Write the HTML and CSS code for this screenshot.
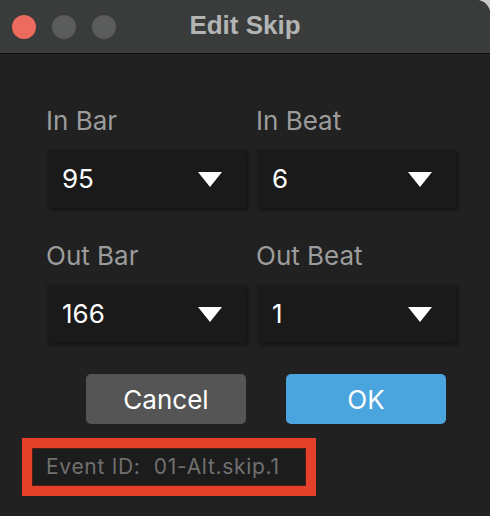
FILE: index.html
```html
<!DOCTYPE html>
<html>
<head>
    <title>Edit Skip</title>
    <meta name="viewport" content="width=device-width, initial-scale=1">
    <link rel="stylesheet" href="styles.css">
</head>
<body>
    <div class="window">
        <div class="titlebar">
            <div class="lights">
                <span class="light close"></span>
                <span class="light"></span>
                <span class="light"></span>
            </div>
            <div class="title">Edit Skip</div>
            <div></div>
        </div>

        <form class="content" id="skipForm">
            <div class="fields">
                <div class="field">
                    <label>In Bar</label>
                    <div class="select"><span>95</span><svg width="24" height="15" viewBox="0 0 24 15"><polygon points="0,0 24,0 12,15" fill="#fff"/></svg></div>
                </div>
                <div class="field">
                    <label>In Beat</label>
                    <div class="select"><span>6</span><svg width="24" height="15" viewBox="0 0 24 15"><polygon points="0,0 24,0 12,15" fill="#fff"/></svg></div>
                </div>
                <div class="field">
                    <label>Out Bar</label>
                    <div class="select"><span>166</span><svg width="24" height="15" viewBox="0 0 24 15"><polygon points="0,0 24,0 12,15" fill="#fff"/></svg></div>
                </div>
                <div class="field">
                    <label>Out Beat</label>
                    <div class="select"><span>1</span><svg width="24" height="15" viewBox="0 0 24 15"><polygon points="0,0 24,0 12,15" fill="#fff"/></svg></div>
                </div>
            </div>

            <div class="buttons">
                <button type="button" class="cancel">Cancel</button>
                <button type="button" class="ok">OK</button>
            </div>

            <div class="highlight">
                <div class="event-id">Event ID:&nbsp; 01-Alt.skip.1</div>
            </div>
        </form>
    </div>
</body>
</html>
```

FILE: styles.css
```css
body {
    margin: 0;
    background: #c9c9c9;
    font-family: Inter, "Noto Sans", sans-serif;
}
.window {
    width: 490px;
    height: 516px;
    background: #212121;
    border-top-right-radius: 14px;
    overflow: hidden;
}
.titlebar {
    height: 53px;
    background: #3a3c3c;
    border-bottom: 1px solid #0e0e0e;
    display: grid;
    grid-template-columns: 1fr auto 1fr;
    align-items: center;
}
.lights {
    display: flex;
    gap: 16px;
    padding-left: 12px;
}
.light {
    width: 24px;
    height: 24px;
    border-radius: 50%;
    background: #5b5c5c;
}
.light.close {
    background: #ed6a5e;
}
.title {
    font-family: "Liberation Sans", Arial, sans-serif;
    font-weight: bold;
    font-size: 26px;
    color: #b3b4b4;
    padding-bottom: 2px;
}
.content {
    padding: 52px 0 0 22px;
}
.fields {
    display: grid;
    grid-template-columns: 199px 199px;
    column-gap: 11px;
    row-gap: 33px;
    margin-left: 25px;
}
.field label {
    display: block;
    font-size: 26px;
    line-height: 30px;
    color: #9c9c9c;
    margin-left: -1px;
    margin-bottom: 14px;
}
.select {
    height: 58px;
    background: #1a1a1a;
    box-shadow: 2px 2px 4px rgba(0, 0, 0, 0.45);
    display: flex;
    align-items: center;
    justify-content: space-between;
    padding: 0 24px 0 15px;
    font-size: 26px;
    line-height: 30px;
    color: #fff;
}
.buttons {
    display: flex;
    gap: 40px;
    margin: 31px 0 0 64px;
}
button {
    width: 160px;
    height: 50px;
    border: none;
    border-radius: 5px;
    font-family: Inter, "Noto Sans", sans-serif;
    font-size: 26px;
    color: #fff;
    cursor: pointer;
}
.cancel {
    background: #555555;
}
.ok {
    background: #4aa4de;
}
.highlight {
    width: 274px;
    margin-top: 14px;
    border: 10px solid #e5402a;
}
.event-id {
    background: #1c1c1c;
    border: 1px solid #4a1f17;
    height: 36px;
    line-height: 36px;
    padding-left: 13px;
    font-size: 21px;
    letter-spacing: 0.7px;
    color: #707070;
}
```
